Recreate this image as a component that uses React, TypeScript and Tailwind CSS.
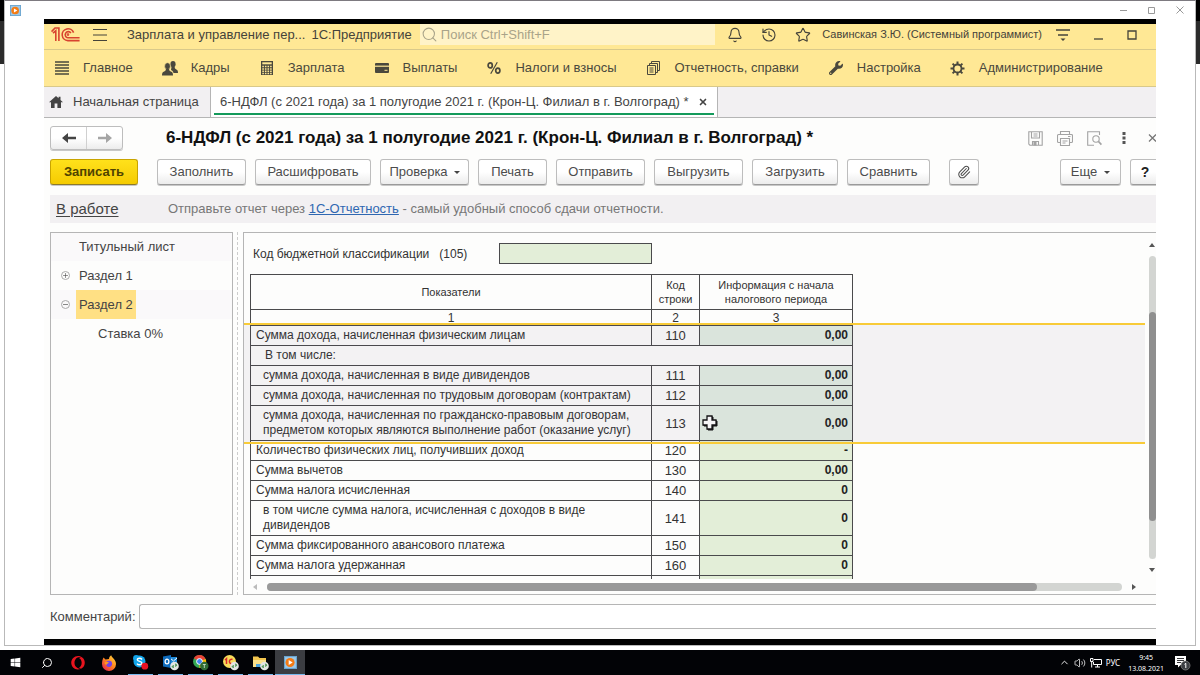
import React, { useState } from 'react';
import { Bell, History, Star, Paperclip, Search, ChevronUp, Volume2, Plus, X } from 'lucide-react';
import { FaWrench, FaOpera, FaWindows } from 'react-icons/fa';

const SECTIONS = [
  { label: 'Главное', icon: <ListIcon /> },
  { label: 'Кадры', icon: <PeopleIcon /> },
  { label: 'Зарплата', icon: <CalcIcon /> },
  { label: 'Выплаты', icon: <CardIcon /> },
  { label: 'Налоги и взносы', icon: <PercentIcon /> },
  { label: 'Отчетность, справки', icon: <DocsIcon /> },
  { label: 'Настройка', icon: <FaWrench size={14} /> },
  { label: 'Администрирование', icon: <GearIcon /> },
];

const ROWS = [
  { text: 'Сумма дохода, начисленная физическим лицам', code: '110', value: '0,00', marked: true },
  { text: 'В том числе:', group: true },
  { text: 'сумма дохода, начисленная в виде дивидендов', code: '111', value: '0,00', nested: true, marked: true },
  {
    text: 'сумма дохода, начисленная по трудовым договорам (контрактам)',
    code: '112',
    value: '0,00',
    nested: true,
    marked: true,
  },
  {
    text: 'сумма дохода, начисленная по гражданско-правовым договорам,',
    text2: 'предметом которых являются выполнение работ (оказание услуг)',
    code: '113',
    value: '0,00',
    nested: true,
    marked: true,
    cursor: true,
  },
  { text: 'Количество физических лиц, получивших доход', code: '120', value: '-' },
  { text: 'Сумма вычетов', code: '130', value: '0,00' },
  { text: 'Сумма налога исчисленная', code: '140', value: '0' },
  { text: 'в том числе сумма налога, исчисленная с доходов в виде', text2: 'дивидендов', code: '141', value: '0', nested: true },
  { text: 'Сумма фиксированного авансового платежа', code: '150', value: '0' },
  { text: 'Сумма налога удержанная', code: '160', value: '0' },
  { text: '', code: '', value: '' },
];

function ListIcon() {
  return (
    <svg width="14" height="14" viewBox="0 0 14 14" stroke="currentColor" strokeWidth="1.6">
      <path d="M0 1h14M0 4h14M0 7h14M0 10h14M0 13h14" />
    </svg>
  );
}

function PeopleIcon() {
  return (
    <svg width="16" height="15" viewBox="0 0 16 15" fill="currentColor">
      <ellipse cx="11" cy="3.2" rx="2.6" ry="3.1" />
      <path d="M9.5 6h3.2c0 1.500.6 2 1.600 2.400 1.200.5 1.700 1.200 1.700 3.600h-4.500c-.3-1.600-1-2.300-2.500-3z" />
      <ellipse cx="5.500" cy="5.200" rx="2.900" ry="3.500" stroke="#ffe895" strokeWidth="0.6" />
      <path d="M4 8h3c0 1.300.6 2 1.800 2.400C10.500 11 11 11.800 11 14.500H0c0-2.700.5-3.500 2.200-4.100C3.400 10 4 9.300 4 8z" />
    </svg>
  );
}

function CalcIcon() {
  return (
    <svg width="12" height="14" viewBox="0 0 12 14">
      <rect width="12" height="14" fill="currentColor" />
      <rect x="1.3" y="1.3" width="9.4" height="2" fill="#ffe895" />
      <path
        d="M1.3 5.5h9.4M1.3 7.9h9.4M1.3 10.3h9.4M1.3 12.4h9.4"
        stroke="#ffe895"
        strokeWidth="1.5"
        strokeDasharray="1.6 1"
      />
    </svg>
  );
}

function CardIcon() {
  return (
    <svg width="14" height="10" viewBox="0 0 14 10">
      <rect width="14" height="10" rx="1" fill="currentColor" />
      <path d="M0 3.2h14" stroke="#ffe895" strokeWidth="1.2" />
      <path d="M9.5 7.3h3" stroke="#ffe895" strokeWidth="1" />
    </svg>
  );
}

function PercentIcon() {
  return (
    <svg width="14" height="12" viewBox="0 0 14 12" fill="none" stroke="currentColor" strokeWidth="1.7">
      <ellipse cx="3.2" cy="3.4" rx="2.1" ry="2.5" />
      <ellipse cx="10.8" cy="8.6" rx="2.1" ry="2.5" />
      <path d="M10.3 0.3 3.7 11.7" strokeWidth="1.2" />
    </svg>
  );
}

function DocsIcon() {
  return (
    <svg width="13" height="14" viewBox="0 0 13 14" fill="none" stroke="currentColor" strokeWidth="1">
      <path d="M4.5 2.5v-2h8v9h-2M2.5 4.5v-2h8v9h-2" />
      <path d="M0.5 4.5h8v9h-8zM2.5 7h4M2.5 9h4M2.5 11h4" />
    </svg>
  );
}

function GearIcon() {
  return (
    <svg width="15" height="15" viewBox="0 0 15 15" fill="none" stroke="currentColor">
      <circle cx="7.5" cy="7.5" r="4" strokeWidth="1.8" />
      <path
        d="M7.5 0.5v3M7.5 11.5v3M0.5 7.5h3M11.5 7.5h3M2.6 2.6l2 2M10.4 10.4l2 2M12.4 2.6l-2 2M4.6 10.4l-2 2"
        strokeWidth="2"
      />
    </svg>
  );
}

function HomeIcon() {
  return (
    <svg width="14" height="12" viewBox="0 0 14 12" fill="currentColor">
      <path d="M7 0 0 6.300h2V12h3.600V7.500h2.800V12H12V6.300h2L11.500 4V.8H9.600v1.500z" />
    </svg>
  );
}

function Logo() {
  return (
    <svg width="29" height="15" viewBox="0 0 29 15" fill="none" stroke="#d8432f" strokeWidth="1.6">
      <path d="M0.5 4.6 4 1h3.9v13" />
      <path d="M2 6.2 4.8 3.8V14" />
      <path d="M22.6 5.6A5.9 5.9 0 1 0 16.8 13.6H28.6" />
      <path d="M19.9 6A3.1 3.1 0 1 0 16.9 10.8H28.6" />
      <circle cx="17" cy="7.6" r="0.5" />
    </svg>
  );
}

function SaveIcon() {
  return (
    <svg width="15" height="15" viewBox="0 0 15 15" fill="none" stroke="currentColor" strokeWidth="1.1">
      <path d="M0.8 0.8h13.4v13.4H1.9L0.8 13z" />
      <path d="M3.5 1v6h8V1M5.5 3h4M5.5 5h4M4.5 14v-3.5h6V14" />
      <path d="M6 11h2v3H6z" fill="currentColor" />
    </svg>
  );
}

function PrinterIcon() {
  return (
    <svg width="16" height="15" viewBox="0 0 16 15" fill="none" stroke="currentColor" strokeWidth="1.1">
      <path d="M3.5 3.5v-3h9v3M3.5 11.5h-2a1 1 0 0 1-1-1v-6a1 1 0 0 1 1-1h13a1 1 0 0 1 1 1v6a1 1 0 0 1-1 1h-2" />
      <path d="M3.5 7.5h9v7h-9zM5.5 10h5M5.5 12h3M11 5.5h2.5" />
    </svg>
  );
}

function PreviewIcon() {
  return (
    <svg width="15" height="15" viewBox="0 0 15 15" fill="none" stroke="currentColor" strokeWidth="1.1">
      <path d="M12.5 4V0.7H0.7v13.6H7" />
      <circle cx="9" cy="8" r="3.2" />
      <path d="m11.4 10.4 3 3.2" strokeWidth="1.6" />
    </svg>
  );
}

function Arrow({ left }: { left?: boolean }) {
  return (
    <svg width="14" height="10" viewBox="0 0 14 10" fill="currentColor">
      {left ? <path d="M0 5 6 0v3.800h8v2.400H6V10z" /> : <path d="M14 5 8 0v3.800H0v2.400h8V10z" />}
    </svg>
  );
}

function Caret() {
  return (
    <svg width="6" height="3" viewBox="0 0 6 3" fill="#444">
      <path d="M0 0h6L3 3z" />
    </svg>
  );
}

function PlayerIcon({ size }: { size: number }) {
  return (
    <svg width={size} height={size} viewBox="0 0 12 12">
      <rect x="0.5" y="0.5" width="11" height="11" fill="#9cc9ea" stroke="#6aa5d0" />
      <circle cx="5.6" cy="6" r="4.2" fill="#f47b14" />
      <path d="M4.3 3.8v4.4L8 6z" fill="#fff" />
    </svg>
  );
}

const SyncBadge = () => (
  <g>
    <circle cx="12.5" cy="12" r="4.3" fill="#e3e6e3" />
    <path d="m10 12.6 1.4-1.4v2.8zM15 11.2l-1.4 1.4V9.8z" fill="#3d8d45" stroke="#3d8d45" strokeWidth="0.6" />
  </g>
);

const RUNNING = [
  {
    name: 'Skype',
    art: (
      <>
        <circle cx="7.5" cy="7.5" r="6" fill="#12a5ea" />
        <circle cx="4.3" cy="4.3" r="3.2" fill="#12a5ea" />
        <path d="M10 5.4C8.600 3.700 5.200 4 5.300 5.800c0 2 4.700 1.200 4.700 3.400 0 2-3.800 2.200-5 .4" fill="none" stroke="#fff" strokeWidth="1.5" />
        <circle cx="12.8" cy="12.2" r="3.4" fill="#e81123" />
      </>
    ),
  },
  {
    name: 'Outlook',
    art: (
      <>
        <path d="M8 3h7v8H8z" fill="#1f8ad8" />
        <path d="m8 4 3.500 3L15 4" fill="none" stroke="#fff" />
        <path d="M1 2.500 9 1v13l-8-1.500z" fill="#0f6cbd" />
        <ellipse cx="5" cy="7.500" rx="1.900" ry="2.300" fill="none" stroke="#fff" strokeWidth="1.300" />
        <SyncBadge />
      </>
    ),
  },
  {
    name: 'Chrome',
    art: (
      <>
        <circle cx="7.5" cy="7.5" r="6.500" fill="#34a853" />
        <path d="M7.500 7.500 1.900 4.200A6.500 6.500 0 0 1 13.600 5z" fill="#ea4335" />
        <path d="M7.500 7.500 13.700 5A6.500 6.500 0 0 1 7.500 14z" fill="#fbbc05" />
        <circle cx="7.5" cy="7.500" r="2.900" fill="#4285f4" stroke="#fff" />
        <circle cx="12.300" cy="12" r="4.200" fill="#2f6b34" />
        <path d="M10.800 10.500h3M12.300 10.500v3.500" stroke="#d6e8d6" strokeWidth="0.800" />
      </>
    ),
  },
  {
    name: '1С',
    art: (
      <>
        <circle cx="7.500" cy="7.500" r="6.500" fill="#f8dc5a" />
        <path d="M3 6 4.500 4.700V10M10.500 5.500a2.200 2.200 0 1 0 0 4H13" fill="none" stroke="#d8282a" strokeWidth="1.500" />
        <SyncBadge />
      </>
    ),
  },
  {
    name: 'Проводник',
    art: (
      <>
        <path d="M1 2.500h5l1.500 1.500H14v9H1z" fill="#f3c64f" />
        <path d="M1 6h13v7H1z" fill="#fbe08a" />
        <path d="M4 10h7v3H4z" fill="#4aa3df" />
        <SyncBadge />
      </>
    ),
  },
];

const TOOL_BUTTON =
  'flex h-[26px] shrink-0 items-center justify-center rounded-[3px] border border-[#bdbdbd] border-b-[#9a9a9a] bg-gradient-to-b from-white from-50% to-[#ececec] text-[13px] text-[#4c4c4c] shadow-[0_1px_0_#c8c8c8]';

const SystemBar = () => {
  const launcher = 'flex h-full w-[31px] items-center justify-center text-white';
  return (
    <footer className="flex h-[25px] shrink-0 items-center bg-[#020306] text-white">
      <button aria-label="Пуск" className={launcher}>
        <FaWindows size={11} />
      </button>
      <button aria-label="Поиск" className={launcher}>
        <Search size={12} className="-scale-x-100" />
      </button>
      <button aria-label="Opera" className={launcher}>
        <FaOpera size={14} color="#e8141e" />
      </button>
      <button aria-label="Firefox" className={launcher}>
        <svg width="16" height="16" viewBox="0 0 16 16">
          <defs>
            <linearGradient id="fox" x1="1" y1="0" x2="0.2" y2="1">
              <stop offset="0" stopColor="#ffe14a" />
              <stop offset="0.5" stopColor="#ff8a1c" />
              <stop offset="1" stopColor="#e8254c" />
            </linearGradient>
          </defs>
          <path d="M2.500 2.500 4.500 4.500 8 4c0-2 1-3 2.200-3.800C10.500 2.500 15 4 15 9a7 7 0 0 1-14 0c0-2.500.500-4.500 1.500-6.500z" fill="url(#fox)" />
          <circle cx="8" cy="8.800" r="3.100" fill="#7542e5" />
          <path d="M3.500 7.500c2-1.500 3-.500 4.500 0-1 1.500-2.500 1-2.500 2.500-1-.500-2-1-2-2.500z" fill="#ff9a1f" />
        </svg>
      </button>
      <div className="ml-px flex h-full">
        {RUNNING.map(app => (
          <button key={app.name} aria-label={app.name} className="flex h-full w-[30px] flex-col items-center justify-between pt-1">
            <svg width="17" height="17" viewBox="0 0 17 17">{app.art}</svg>
            <span className="h-px w-[25px] bg-[#76b9ed]" />
          </button>
        ))}
        <button aria-label="Проигрыватель" className="flex h-full w-[30px] flex-col items-center justify-between bg-[#3b3d42] pt-[6px]">
          <PlayerIcon size={13} />
          <span className="h-px w-full bg-[#76b9ed]" />
        </button>
      </div>
      <div className="ml-auto flex items-center gap-1 pr-[9px] font-['Noto_Sans',sans-serif] text-[7px] leading-[11px]">
        <ChevronUp size={11} />
        <Volume2 size={12} strokeWidth={1.5} />
        <svg width="12" height="10" viewBox="0 0 12 10" fill="none" stroke="currentColor">
          <path d="M4 1.500h7.500v5H3.500V4M0.500 0.500h2.500v3H0.500zM1.700 3.500v6M5 9h5M7.500 6.500V9" />
        </svg>
        <span className="text-[8px]">РУС</span>
        <div className="ml-1 text-center">
          <div>9:45</div>
          <div>13.08.2021</div>
        </div>
        <svg className="ml-[6px]" width="17" height="16" viewBox="0 0 17 16">
          <path d="M1 1h11v9H6.500L4 12.500V10H1z" fill="#fff" />
          <path d="M3 3.500h7M3 5.500h7M3 7.500h4" stroke="#020306" strokeWidth="0.800" />
          <circle cx="11.500" cy="10.500" r="4.500" fill="#3c3f44" stroke="#8a8a8a" strokeWidth="0.700" />
          <path d="M10.500 9.300 11.800 8.300v4.700" stroke="#fff" fill="none" />
        </svg>
      </div>
    </footer>
  );
};

const ReportTable = () => (
  <table className="w-[602px] table-fixed border-collapse text-[12px] leading-[15px] text-[#333] [&_td]:border [&_td]:border-[#4a4a4c] [&_th]:border [&_th]:border-[#4a4a4c] [&_th]:font-normal">
    <colgroup>
      <col className="w-[401px]" />
      <col className="w-[48px]" />
      <col className="w-[153px]" />
    </colgroup>
    <thead>
      <tr className="h-[35px] text-[11px] leading-[14px]">
        <th>Показатели</th>
        <th>Код строки</th>
        <th>Информация с начала налогового периода</th>
      </tr>
      <tr className="h-4 leading-[14px]">
        <th>1</th>
        <th>2</th>
        <th>3</th>
      </tr>
    </thead>
    <tbody>
      {ROWS.map((row, i) =>
        row.group ? (
          <tr key={i} className="h-5">
            <td colSpan={3} className="pl-[14px]">{row.text}</td>
          </tr>
        ) : (
          <tr key={i} className={row.text2 ? 'h-[35px]' : 'h-5'}>
            <td className={row.nested ? 'pl-3' : 'pl-[5px]'}>
              {row.text}
              {row.text2 && <br />}
              {row.text2}
            </td>
            <td className="text-center text-[13px]">{row.code}</td>
            <td className={row.marked ? 'relative bg-[#e3efe4]' : 'relative bg-[#e3eed8]'}>
              <input
                aria-label={`Строка ${row.code}`}
                defaultValue={row.value}
                className="block h-[15px] w-full bg-transparent pr-1 text-right text-[12px] font-bold text-[#222] outline-none"
              />
              {row.cursor && (
                <svg className="absolute top-[9px] left-[2px]" width="16" height="16" viewBox="0 0 16 16">
                  <path d="M6 2h5v4h4v5h-4v4H6v-4H2V6h4z" fill="#111" stroke="#111" strokeWidth="1" />
                  <path d="M5 1h5v4h4v5h-4v4H5v-4H1V5h4z" fill="#fff" stroke="#111" strokeWidth="1.300" />
                </svg>
              )}
            </td>
          </tr>
        )
      )}
    </tbody>
  </table>
);

const App: React.FC = () => {
  const [comment, setComment] = useState('');
  const [kbk, setKbk] = useState('');

  return (
    <div className="flex h-screen flex-col overflow-hidden bg-white font-['Liberation_Sans',Arial,sans-serif] text-[13px] text-[#444]">
      <div className="flex min-h-0 flex-1 pb-1">
        <div className="w-1 shrink-0">
          <div className="h-[21px] bg-black" />
          <div className="h-[43px] bg-[#2b2b2b]" />
        </div>

        <div className="flex min-w-0 flex-1 flex-col border border-[#b9b9b9] border-t-[#7d7a80] bg-white">
          <div className="flex h-[18px] shrink-0 items-center justify-between pr-[10px] pl-[5px]">
            <PlayerIcon size={11} />
            <div className="flex gap-[18px] text-[#999]">
              <button aria-label="Свернуть окно">
                <svg width="10" height="8" viewBox="0 0 10 8" stroke="currentColor"><path d="M1 4.500h7" /></svg>
              </button>
              <button aria-label="Развернуть окно">
                <svg width="10" height="8" viewBox="0 0 10 8" fill="none" stroke="currentColor"><path d="M1.500 1.500h6v6h-6z" /></svg>
              </button>
              <button aria-label="Закрыть окно">
                <svg width="10" height="8" viewBox="0 0 10 8" stroke="currentColor"><path d="m1.500 0.500 7 7M8.500 0.500l-7 7" /></svg>
              </button>
            </div>
          </div>

          <div className="mx-[39px] flex min-h-0 flex-1 flex-col overflow-hidden border-t-[5px] border-b-[6px] border-black bg-[#fdfdfc]">
            {/* program title */}
            <header className="flex h-[26px] shrink-0 items-center border-b border-[#d9c98a] bg-[#ffe895] pr-[19px] pb-1 pl-[7px] text-[#45433a]">
              <Logo />
              <button aria-label="Меню" className="ml-[13px]">
                <svg width="14" height="12" viewBox="0 0 14 12" stroke="currentColor"><path d="M0 .5h14M0 6h14M0 11.500h14" /></svg>
              </button>
              <span className="ml-5 whitespace-nowrap">Зарплата и управление пер...</span>
              <span className="ml-[6px] whitespace-nowrap">1С:Предприятие</span>
              <label className="ml-2 flex h-[21px] flex-1 items-center gap-[3px] bg-[#fff3c8] pl-px text-[#a9a389]">
                <Search size={17} strokeWidth={1.5} className="shrink-0" />
                <input
                  aria-label="Поиск"
                  placeholder="Поиск Ctrl+Shift+F"
                  className="w-full bg-transparent outline-none placeholder:text-[#a9a389]"
                />
              </label>
              <div className="ml-3 flex items-center gap-[18px]">
                <button aria-label="Уведомления"><Bell size={16} strokeWidth={1.7} /></button>
                <button aria-label="История"><History size={16} strokeWidth={1.7} /></button>
                <button aria-label="Избранное"><Star size={16} strokeWidth={1.7} /></button>
              </div>
              <span className="ml-[11px] text-[11px] whitespace-nowrap">Савинская З.Ю. (Системный программист)</span>
              <button aria-label="Настройки окна" className="ml-[14px]">
                <svg width="14" height="14" viewBox="0 0 14 14" stroke="currentColor" strokeWidth="1.300">
                  <path d="M0 2h14M2 7h10" />
                  <path d="M4.500 10.500h5L7 13z" fill="currentColor" stroke="none" />
                </svg>
              </button>
              <button aria-label="Свернуть" className="ml-6">
                <svg width="9" height="10" viewBox="0 0 9 10" stroke="currentColor" strokeWidth="1.300"><path d="M0 9h9" /></svg>
              </button>
              <button aria-label="Развернуть" className="ml-6">
                <svg width="10" height="10" viewBox="0 0 10 10" fill="none" stroke="currentColor" strokeWidth="1.300"><path d="M1 1h8v8H1z" /></svg>
              </button>
            </header>

            {/* sections */}
            <nav className="flex h-[37px] shrink-0 items-center gap-[29px] border-b border-[#d9c98a] bg-[#ffe895] pl-[10px] text-[#4a483d]">
              {SECTIONS.map(s => (
                <a key={s.label} href="#" className="flex items-center gap-[13px] whitespace-nowrap">
                  <span className="flex w-4 justify-center">{s.icon}</span>
                  {s.label}
                </a>
              ))}
            </nav>

            {/* open tabs */}
            <div className="flex h-[31px] shrink-0 border-b border-[#b5b5b5] bg-[#f2f0f2]">
              <button className="flex w-[167px] items-center gap-[10px] border-r border-[#b5b5b5] pl-[5px] whitespace-nowrap">
                <HomeIcon />
                Начальная страница
              </button>
              <div className="flex border-r border-[#b5b5b5] bg-white px-[3px] pb-[2px]">
                <div className="flex items-center gap-[9px] border-b-2 border-[#149a5b] px-[6px] pt-[3px] whitespace-nowrap">
                  <span>6-НДФЛ (с 2021 года) за 1 полугодие 2021 г. (Крон-Ц. Филиал в г. Волгоград) *</span>
                  <button aria-label="Закрыть вкладку"><X size={10} strokeWidth={4} /></button>
                </div>
              </div>
            </div>

            <main className="flex min-h-0 flex-1 flex-col pl-[6px]">
              <div className="mt-2 flex h-6 shrink-0 items-center">
                <div className="flex h-6 w-[73px] rounded-[3px] border border-[#bdbdbd] bg-gradient-to-b from-white from-50% to-[#ececec] shadow-[0_1px_0_#c8c8c8]">
                  <button aria-label="Назад" className="flex flex-1 items-center justify-center border-r border-[#d0d0d0] text-[#444]"><Arrow left /></button>
                  <button aria-label="Вперед" className="flex flex-1 items-center justify-center text-[#a5a5a5]"><Arrow /></button>
                </div>
                <h1 className="ml-[43px] text-[17px] font-bold whitespace-nowrap text-[#111]">
                  6-НДФЛ (с 2021 года) за 1 полугодие 2021 г. (Крон-Ц. Филиал в г. Волгоград) *
                </h1>
                <div className="-mr-px ml-auto flex items-center text-[#a3a3a3]">
                  <button aria-label="Сохранить"><SaveIcon /></button>
                  <button aria-label="Печать" className="ml-[14px]"><PrinterIcon /></button>
                  <button aria-label="Просмотр" className="ml-[14px]"><PreviewIcon /></button>
                  <button aria-label="Еще" className="ml-5 text-[#555]">
                    <svg width="4" height="12" viewBox="0 0 4 12" fill="currentColor"><path d="M.5 0h3v3h-3zM.5 4.500h3v3h-3zM.5 9h3v3h-3z" /></svg>
                  </button>
                  <button aria-label="Закрыть" className="ml-[22px] text-[#777]">
                    <svg width="9" height="8" viewBox="0 0 9 8" stroke="currentColor" strokeWidth="1.300"><path d="m1 0.500 7 7M8 0.500l-7 7" /></svg>
                  </button>
                </div>
              </div>

              <div className="mt-[9px] flex shrink-0 items-center gap-[9px]">
                <button className="mr-[10px] h-[26px] w-[88px] rounded-[3px] border border-[#c9a400] border-b-[#8d7a2a] bg-gradient-to-b from-[#ffe11a] to-[#f5cb00] font-bold text-[#4f4300] shadow-[0_1px_0_#c8c8c8]">
                  Записать
                </button>
                <button className={`${TOOL_BUTTON} w-[89px]`}>Заполнить</button>
                <button className={`${TOOL_BUTTON} w-[116px]`}>Расшифровать</button>
                <button className={`${TOOL_BUTTON} w-[89px] gap-[6px]`}>Проверка <Caret /></button>
                <button className={`${TOOL_BUTTON} w-[69px]`}>Печать</button>
                <button className={`${TOOL_BUTTON} w-[89px]`}>Отправить</button>
                <button className={`${TOOL_BUTTON} w-[89px]`}>Выгрузить</button>
                <button className={`${TOOL_BUTTON} w-[86px]`}>Загрузить</button>
                <button className={`${TOOL_BUTTON} w-[83px]`}>Сравнить</button>
                <button aria-label="Файлы" className={`${TOOL_BUTTON} ml-[10px] w-[30px]`}>
                  <Paperclip size={14} strokeWidth={1.8} />
                </button>
                <button className={`${TOOL_BUTTON} ml-auto w-[61px] gap-[7px]`}>Еще <Caret /></button>
                <button aria-label="Справка" className={`${TOOL_BUTTON} -mr-1 w-[30px]`}><b className="text-[14px] text-[#222]">?</b></button>
              </div>

              <div className="mt-[10px] flex h-7 shrink-0 items-center bg-[#f2f0f2] pl-[6px]">
                <a href="#" className="w-[112px] text-[15px] underline underline-offset-2">В работе</a>
                <p className="text-[#777]">
                  Отправьте отчет через <a href="#" className="text-[#2f67b1] underline">1С-Отчетность</a> - самый удобный способ сдачи отчетности.
                </p>
              </div>

              <div className="mt-[9px] flex min-h-0 flex-1">
                <ul className="w-[183px] shrink-0 border border-[#b5b5b5]">
                  <li className="flex h-7 items-center bg-[#faf9fa] pl-7">Титульный лист</li>
                  <li className="flex h-[29px] items-center pl-[10px]">
                    <button aria-label="Развернуть раздел 1" className="mr-[6px] flex size-[9px] items-center justify-center rounded-full border border-[#aaa]"><Plus size={7} /></button>
                    <span className="px-[3px]">Раздел 1</span>
                  </li>
                  <li className="flex h-[29px] items-center bg-[#faf9fa] pl-[10px]">
                    <button aria-label="Свернуть раздел 2" className="mr-[6px] flex size-[9px] items-center justify-center rounded-full border border-[#aaa]"><span className="h-px w-[5px] bg-[#888]" /></button>
                    <span className="flex h-full items-center bg-[#ffe084] px-[3px]">Раздел 2</span>
                  </li>
                  <li className="flex h-[29px] items-center pl-[47px]">Ставка 0%</li>
                </ul>
                <div className="mx-1 w-[2px] shrink-0 border-l border-dashed border-[#ccc]" />

                <section className="flex min-w-0 flex-1 flex-col border border-r-0 border-[#b5b5b5]">
                  <div className="flex min-h-0 flex-1">
                    <div className="relative mr-[3px] min-w-0 flex-1 overflow-hidden">
                      <div className="flex h-[41px] items-center pl-[9px] text-[12px] text-[#333]">
                        <label htmlFor="kbk" className="w-[246px] whitespace-pre">Код бюджетной классификации   (105)</label>
                        <input
                          id="kbk"
                          value={kbk}
                          onChange={e => setKbk(e.target.value)}
                          className="h-[21px] w-[153px] border border-[#4a4a4c] bg-[#e3eed8] px-1 outline-none"
                        />
                      </div>
                      <div className="pl-[6px]">
                        <ReportTable />
                      </div>
                      {/* rows picked out for the viewer */}
                      <div className="pointer-events-none absolute top-[90px] right-0 left-0 h-[121px] border-y-2 border-[#f8cb38] bg-[#503c60]/6" />
                    </div>
                    <div className="flex w-2 shrink-0 flex-col items-center pt-[10px] pb-[7px]">
                      <svg width="6" height="4" viewBox="0 0 6 4" fill="#555"><path d="M0 4h6L3 0z" /></svg>
                      <div className="my-[9px] flex w-[7px] flex-1 flex-col rounded-full bg-[#d3d5d2]">
                        <div className="mt-[56px] h-[69%] rounded-full bg-[#8f8f8f]" />
                      </div>
                      <svg width="6" height="4" viewBox="0 0 6 4" fill="#555"><path d="M0 0h6L3 4z" /></svg>
                    </div>
                  </div>
                  <div className="flex h-[15px] shrink-0 items-center pr-5 pl-[9px]">
                    <svg width="4" height="6" viewBox="0 0 4 6" fill="#bbb"><path d="M4 0v6L0 3z" /></svg>
                    <div className="mx-[10px] h-2 flex-1 rounded-full bg-[#d3d5d2]">
                      <div className="h-2 w-[90%] rounded-full bg-[#999]" />
                    </div>
                    <svg width="4" height="6" viewBox="0 0 4 6" fill="#555"><path d="M0 0v6l4-3z" /></svg>
                  </div>
                </section>
              </div>

              <div className="mt-[9px] mb-[10px] flex h-[25px] shrink-0 items-center gap-[3px]">
                <label htmlFor="comment">Комментарий:</label>
                <input
                  id="comment"
                  value={comment}
                  onChange={e => setComment(e.target.value)}
                  className="h-[25px] min-w-0 flex-1 rounded-l-[3px] border border-r-0 border-[#b5b5b5] bg-white px-2 outline-none"
                />
              </div>
            </main>
          </div>
        </div>

        <div className="w-1 shrink-0">
          <div className="h-[21px] bg-black" />
          <div className="h-[43px] bg-[#2b2b2b]" />
        </div>
      </div>
      <SystemBar />
    </div>
  );
};

export default App;
